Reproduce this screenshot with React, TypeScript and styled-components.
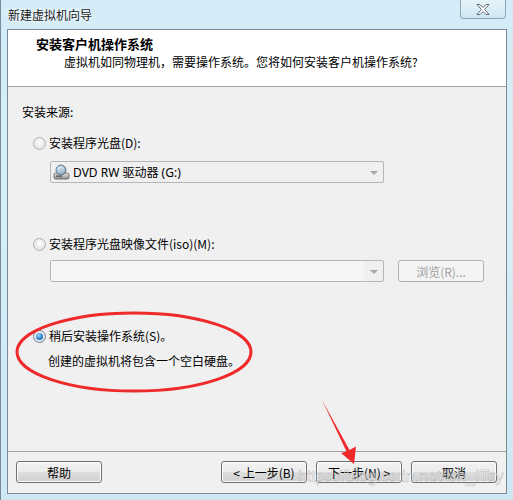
import React from "react";
import styled, { createGlobalStyle } from "styled-components";

const Global = createGlobalStyle`
  html, body { margin: 0; padding: 0; }
  body {
    width: 513px; height: 500px; overflow: hidden;
    font-family: "Noto Sans", "Noto Sans CJK SC", sans-serif;
    font-size: 12px; color: #000;
  }
`;

const Window = styled.div`
  position: relative;
  width: 513px;
  height: 500px;
  box-sizing: border-box;
  display: flex;
  flex-direction: column;
  background: linear-gradient(180deg, #d3ecf7 0%, #d6eef8 40%, #cde8f4 100%);
  border-left: 1px solid #7a8a99;
`;

const TitleBar = styled.div`
  height: 29px;
  display: flex;
  align-items: flex-start;
  justify-content: space-between;
  padding-left: 7px;
  box-sizing: border-box;
`;

const TitleText = styled.div`
  font-family: "Noto Sans CJK SC", sans-serif;
  font-size: 12px;
  line-height: 14px;
  margin-top: 8px;
  color: #1a1a1a;
  text-shadow: 0 0 6px #ffffff, 0 0 3px #ffffff;
`;

const CloseButton = styled.div`
  width: 46px;
  height: 19px;
  margin-right: 7px;
  box-sizing: border-box;
  border: 1px solid #8ea6b6;
  border-top: none;
  border-radius: 0 0 4px 4px;
  background: linear-gradient(180deg, #e6f4fa 0%, #cfe6f1 100%);
  display: flex;
  align-items: center;
  justify-content: center;
`;

const Inner = styled.div`
  flex: 1;
  margin: 0 6px 6px 6px;
  border: 1px solid #7d8a95;
  background: #f0f0f0;
  display: flex;
  flex-direction: column;
`;

const Header = styled.div`
  height: 56px;
  background: #ffffff;
  border-bottom: 1px solid #a0a0a0;
  box-sizing: content-box;
  display: flex;
  flex-direction: column;
  font-family: "Noto Sans CJK SC", sans-serif;
`;

const HeaderTitle = styled.div`
  font-weight: bold;
  font-size: 13px;
  line-height: 16px;
  margin: 6px 0 0 28px;
`;

const HeaderSub = styled.div`
  font-size: 12px;
  line-height: 16px;
  margin: 2px 0 0 56px;
`;

const Body = styled.div`
  flex: 1;
  display: flex;
  flex-direction: column;
  padding-left: 14px;
  font-family: "Noto Sans CJK SC", sans-serif;
`;

const Line = styled.div<{ $top: number; $indent?: number }>`
  margin-top: ${(p) => p.$top}px;
  margin-left: ${(p) => p.$indent ?? 0}px;
  line-height: 16px;
  height: 16px;
  display: flex;
  align-items: center;
  gap: 3px;
`;

const Radio = styled.span<{ $checked?: boolean }>`
  width: 13px;
  height: 13px;
  box-sizing: border-box;
  border-radius: 50%;
  border: 1px solid ${(p) => (p.$checked ? "#6b7f94" : "#b1b1b1")};
  background: radial-gradient(circle at 50% 40%, #ffffff 0%, #e4e4e4 70%, #d6d6d6 100%);
  display: inline-flex;
  align-items: center;
  justify-content: center;
  margin-left: 11px;
  &::after {
    content: "";
    width: 7px;
    height: 7px;
    border-radius: 50%;
    display: ${(p) => (p.$checked ? "block" : "none")};
    background: radial-gradient(circle at 40% 35%, #a8dcff 0%, #2a7fd0 55%, #134d8c 100%);
  }
`;

const Combo = styled.div<{ $width: number }>`
  width: ${(p) => p.$width}px;
  height: 22px;
  box-sizing: border-box;
  border: 1px solid #b6b6b6;
  border-radius: 2px;
  background: #f0f0f0;
  display: flex;
  align-items: center;
`;

const ComboField = styled.div<{ $blank?: boolean }>`
  flex: 1;
  height: 100%;
  display: flex;
  align-items: center;
  gap: 3px;
  padding-left: 2px;
  font-family: "Noto Sans", "Noto Sans CJK SC", sans-serif;
  font-size: 12px;
  background: ${(p) => (p.$blank ? "#f5f5f5" : "transparent")};
`;

const ComboArrow = styled.div`
  width: 19px;
  height: 100%;
  display: flex;
  align-items: center;
  justify-content: center;
  &::before {
    content: "";
    border-left: 4px solid transparent;
    border-right: 4px solid transparent;
    border-top: 4px solid #a8a8a8;
    margin-top: 1px;
  }
`;

const ComboRow = styled.div<{ $top: number }>`
  display: flex;
  align-items: flex-start;
  gap: 14px;
  margin-top: ${(p) => p.$top}px;
  margin-left: 28px;
`;

const Button = styled.button<{ $disabled?: boolean }>`
  width: 86px;
  height: 22px;
  box-sizing: border-box;
  border: 1px solid ${(p) => (p.$disabled ? "#adb2b5" : "#707070")};
  border-radius: 3px;
  background: ${(p) =>
    p.$disabled
      ? "#f4f4f4"
      : "linear-gradient(180deg, #f2f2f2 0%, #ebebeb 48%, #dddddd 52%, #cfcfcf 100%)"};
  color: ${(p) => (p.$disabled ? "#a0a0a0" : "#000")};
  font-family: "Noto Sans CJK SC", sans-serif;
  font-size: 12px;
  padding: 0;
  display: flex;
  align-items: center;
  justify-content: center;
  box-shadow: ${(p) => (p.$disabled ? "none" : "inset 0 0 0 1px #fcfcfc")};
`;

const Footer = styled.div`
  border-top: 1px solid #a0a0a0;
  padding: 9px 9px 10px 8px;
  display: flex;
  align-items: center;
`;

const FooterRight = styled.div`
  margin-left: auto;
  display: flex;
  gap: 9px;
`;

const Overlay = styled.svg`
  position: absolute;
  left: 0;
  top: 0;
  width: 513px;
  height: 500px;
  pointer-events: none;
`;

const Watermark = styled.div`
  position: absolute;
  left: 297px;
  top: 468px;
  font-family: "Liberation Sans", sans-serif;
  font-size: 16px;
  white-space: nowrap;
  color: rgba(255, 255, 255, 0.55);
  -webkit-text-stroke: 0.5px rgba(140, 140, 140, 0.6);
  pointer-events: none;
`;

const DriveIcon = () => (
  <svg width="17" height="16" viewBox="0 0 17 16">
    <defs>
      <linearGradient id="dg" x1="0" y1="0" x2="0" y2="1">
        <stop offset="0" stopColor="#e8e8e8" />
        <stop offset="1" stopColor="#8c8c8c" />
      </linearGradient>
      <radialGradient id="disc" cx="0.45" cy="0.4" r="0.6">
        <stop offset="0" stopColor="#ffffff" />
        <stop offset="0.5" stopColor="#b9d3e6" />
        <stop offset="1" stopColor="#6f8ea8" />
      </radialGradient>
    </defs>
    <rect x="1" y="9" width="15" height="6" rx="1.5" fill="url(#dg)" stroke="#5a5a5a" strokeWidth="0.8" />
    <rect x="3" y="11.5" width="6" height="1.2" fill="#4a4a4a" />
    <circle cx="8" cy="6" r="5" fill="url(#disc)" stroke="#5b6d7d" strokeWidth="0.8" />
    <circle cx="8" cy="6" r="1.3" fill="#ffffff" stroke="#6b7b88" strokeWidth="0.6" />
  </svg>
);

const CloseIcon = () => (
  <svg width="16" height="13" viewBox="0 0 16 13">
    <path
      d="M2 1.5 L5 1.5 L8 4.5 L11 1.5 L14 1.5 L9.6 6.5 L14 11.5 L11 11.5 L8 8.5 L5 11.5 L2 11.5 L6.4 6.5 Z"
      fill="#ffffff"
      stroke="#5b6a75"
      strokeWidth="1"
      strokeLinejoin="round"
    />
  </svg>
);

export default function App() {
  return (
    <>
      <Global />
      <Window>
        <TitleBar>
          <TitleText>新建虚拟机向导</TitleText>
          <CloseButton>
            <CloseIcon />
          </CloseButton>
        </TitleBar>
        <Inner>
          <Header>
            <HeaderTitle>安装客户机操作系统</HeaderTitle>
            <HeaderSub>虚拟机如同物理机，需要操作系统。您将如何安装客户机操作系统?</HeaderSub>
          </Header>
          <Body>
            <Line $top={17}>安装来源:</Line>
            <Line $top={15}>
              <Radio />
              安装程序光盘(D):
            </Line>
            <ComboRow $top={10}>
              <Combo $width={334}>
                <ComboField>
                  <DriveIcon />
                  DVD RW 驱动器 (G:)
                </ComboField>
                <ComboArrow />
              </Combo>
            </ComboRow>
            <Line $top={53}>
              <Radio />
              安装程序光盘映像文件(iso)(M):
            </Line>
            <ComboRow $top={8}>
              <Combo $width={334}>
                <ComboField $blank />
                <ComboArrow />
              </Combo>
              <Button $disabled>浏览(R)...</Button>
            </ComboRow>
            <Line $top={46}>
              <Radio $checked />
              稍后安装操作系统(S)。
            </Line>
            <Line $top={9} $indent={26}>
              创建的虚拟机将包含一个空白硬盘。
            </Line>
          </Body>
          <Footer>
            <Button>帮助</Button>
            <FooterRight>
              <Button>&lt; 上一步(B)</Button>
              <Button>下一步(N) &gt;</Button>
              <Button>取消</Button>
            </FooterRight>
          </Footer>
        </Inner>
        <Watermark>https://blog.csdn.net/ish_ITsy</Watermark>
        <Overlay viewBox="0 0 513 500">
          <ellipse cx="133" cy="352" rx="117" ry="39" fill="none" stroke="#ee2a2a" strokeWidth="3" />
          <polygon
            points="321,400 348.5,450 355,446.5 353,464 340,453 345.5,451.5"
            fill="#f02a2a"
          />
        </Overlay>
      </Window>
    </>
  );
}
